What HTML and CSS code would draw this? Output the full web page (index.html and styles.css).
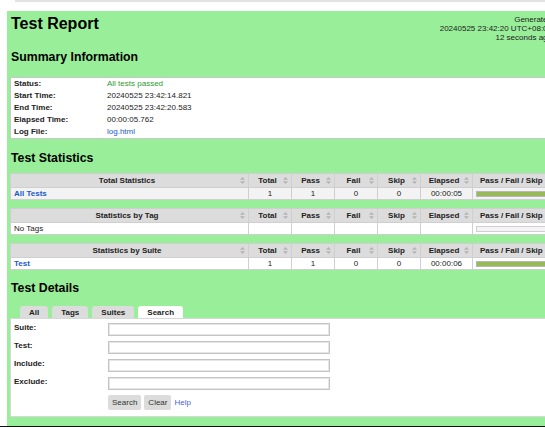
FILE: index.html
```html
<!DOCTYPE html>
<html lang="en">
  <head>
    <meta charset="UTF-8" />
    <title>Test Report</title>
    <link rel="stylesheet" href="styles.css">
  </head>
  <body>
    <div class="topline"></div>
    <div class="page">
      <div class="header">
        <div class="generated">Generated<br />20240525 23:42:20 UTC+08:00<br />12 seconds ago</div>
        <h1>Test Report</h1>
      </div>

      <h2 class="summary-title">Summary Information</h2>
      <table class="summary">
        <tr><th>Status:</th><td class="pass">All tests passed</td></tr>
        <tr><th>Start Time:</th><td>20240525 23:42:14.821</td></tr>
        <tr><th>End Time:</th><td>20240525 23:42:20.583</td></tr>
        <tr><th>Elapsed Time:</th><td>00:00:05.762</td></tr>
        <tr><th>Log File:</th><td><a href="#">log.html</a></td></tr>
      </table>

      <h2 class="stats-title">Test Statistics</h2>
      <table class="stats">
        <colgroup>
          <col class="c-name" /><col class="c-num" /><col class="c-num" /><col class="c-num" /><col class="c-num" /><col class="c-time" /><col />
        </colgroup>
        <tr>
          <th>Total Statistics<span class="sort"><svg viewBox="0 0 5 7" width="5" height="7"><path d="M2.5 0 L5 2.7 L0 2.7 Z M2.5 7 L5 4.3 L0 4.3 Z" /></svg></span></th>
          <th>Total<span class="sort"><svg viewBox="0 0 5 7" width="5" height="7"><path d="M2.5 0 L5 2.7 L0 2.7 Z M2.5 7 L5 4.3 L0 4.3 Z" /></svg></span></th>
          <th>Pass<span class="sort"><svg viewBox="0 0 5 7" width="5" height="7"><path d="M2.5 0 L5 2.7 L0 2.7 Z M2.5 7 L5 4.3 L0 4.3 Z" /></svg></span></th>
          <th>Fail<span class="sort"><svg viewBox="0 0 5 7" width="5" height="7"><path d="M2.5 0 L5 2.7 L0 2.7 Z M2.5 7 L5 4.3 L0 4.3 Z" /></svg></span></th>
          <th>Skip<span class="sort"><svg viewBox="0 0 5 7" width="5" height="7"><path d="M2.5 0 L5 2.7 L0 2.7 Z M2.5 7 L5 4.3 L0 4.3 Z" /></svg></span></th>
          <th>Elapsed<span class="sort"><svg viewBox="0 0 5 7" width="5" height="7"><path d="M2.5 0 L5 2.7 L0 2.7 Z M2.5 7 L5 4.3 L0 4.3 Z" /></svg></span></th>
          <th class="graph-head">Pass / Fail / Skip</th>
        </tr>
        <tr class="row-grey">
          <td class="name"><a href="#">All Tests</a></td>
          <td>1</td><td>1</td><td>0</td><td>0</td><td>00:00:05</td>
          <td class="graph-cell"><div class="graph"><div class="graph-pass"></div></div></td>
        </tr>
      </table>

      <table class="stats">
        <colgroup>
          <col class="c-name" /><col class="c-num" /><col class="c-num" /><col class="c-num" /><col class="c-num" /><col class="c-time" /><col />
        </colgroup>
        <tr>
          <th>Statistics by Tag<span class="sort"><svg viewBox="0 0 5 7" width="5" height="7"><path d="M2.5 0 L5 2.7 L0 2.7 Z M2.5 7 L5 4.3 L0 4.3 Z" /></svg></span></th>
          <th>Total<span class="sort"><svg viewBox="0 0 5 7" width="5" height="7"><path d="M2.5 0 L5 2.7 L0 2.7 Z M2.5 7 L5 4.3 L0 4.3 Z" /></svg></span></th>
          <th>Pass<span class="sort"><svg viewBox="0 0 5 7" width="5" height="7"><path d="M2.5 0 L5 2.7 L0 2.7 Z M2.5 7 L5 4.3 L0 4.3 Z" /></svg></span></th>
          <th>Fail<span class="sort"><svg viewBox="0 0 5 7" width="5" height="7"><path d="M2.5 0 L5 2.7 L0 2.7 Z M2.5 7 L5 4.3 L0 4.3 Z" /></svg></span></th>
          <th>Skip<span class="sort"><svg viewBox="0 0 5 7" width="5" height="7"><path d="M2.5 0 L5 2.7 L0 2.7 Z M2.5 7 L5 4.3 L0 4.3 Z" /></svg></span></th>
          <th>Elapsed<span class="sort"><svg viewBox="0 0 5 7" width="5" height="7"><path d="M2.5 0 L5 2.7 L0 2.7 Z M2.5 7 L5 4.3 L0 4.3 Z" /></svg></span></th>
          <th class="graph-head">Pass / Fail / Skip</th>
        </tr>
        <tr>
          <td class="name plain">No Tags</td>
          <td></td><td></td><td></td><td></td><td></td>
          <td class="graph-cell"><div class="graph empty"></div></td>
        </tr>
      </table>

      <table class="stats">
        <colgroup>
          <col class="c-name" /><col class="c-num" /><col class="c-num" /><col class="c-num" /><col class="c-num" /><col class="c-time" /><col />
        </colgroup>
        <tr>
          <th>Statistics by Suite<span class="sort"><svg viewBox="0 0 5 7" width="5" height="7"><path d="M2.5 0 L5 2.7 L0 2.7 Z M2.5 7 L5 4.3 L0 4.3 Z" /></svg></span></th>
          <th>Total<span class="sort"><svg viewBox="0 0 5 7" width="5" height="7"><path d="M2.5 0 L5 2.7 L0 2.7 Z M2.5 7 L5 4.3 L0 4.3 Z" /></svg></span></th>
          <th>Pass<span class="sort"><svg viewBox="0 0 5 7" width="5" height="7"><path d="M2.5 0 L5 2.7 L0 2.7 Z M2.5 7 L5 4.3 L0 4.3 Z" /></svg></span></th>
          <th>Fail<span class="sort"><svg viewBox="0 0 5 7" width="5" height="7"><path d="M2.5 0 L5 2.7 L0 2.7 Z M2.5 7 L5 4.3 L0 4.3 Z" /></svg></span></th>
          <th>Skip<span class="sort"><svg viewBox="0 0 5 7" width="5" height="7"><path d="M2.5 0 L5 2.7 L0 2.7 Z M2.5 7 L5 4.3 L0 4.3 Z" /></svg></span></th>
          <th>Elapsed<span class="sort"><svg viewBox="0 0 5 7" width="5" height="7"><path d="M2.5 0 L5 2.7 L0 2.7 Z M2.5 7 L5 4.3 L0 4.3 Z" /></svg></span></th>
          <th class="graph-head">Pass / Fail / Skip</th>
        </tr>
        <tr>
          <td class="name"><a href="#">Test</a></td>
          <td>1</td><td>1</td><td>0</td><td>0</td><td>00:00:06</td>
          <td class="graph-cell"><div class="graph"><div class="graph-pass"></div></div></td>
        </tr>
      </table>

      <h2 class="details-title">Test Details</h2>
      <div class="tabs">
        <span class="tab">All</span>
        <span class="tab">Tags</span>
        <span class="tab">Suites</span>
        <span class="tab selected">Search</span>
      </div>
      <div class="tab-content">
        <div class="search-form">
          <label>Suite:</label><input type="text" />
          <label>Test:</label><input type="text" />
          <label>Include:</label><input type="text" />
          <label>Exclude:</label><input type="text" />
          <span></span>
          <div class="search-buttons">
            <button>Search</button>
            <button>Clear</button>
            <a href="#" class="help">Help</a>
          </div>
        </div>
      </div>
    </div>
    <div class="bottom-bar"></div>
  </body>
</html>
```

FILE: styles.css
```css
html {
  overflow: hidden;
}

body {
  margin: 0;
  width: 620px;
  background: #fff;
  font-family: "Liberation Sans", Arial, sans-serif;
  font-size: 8px;
  color: #222;
}

a {
  color: #1a5acc;
  text-decoration: none;
}

.topline {
  height: 2px;
  margin-left: 15px;
  margin-bottom: 9px;
  background: #e2e2e2;
}

.page {
  width: 542px;
  margin-left: 7px;
  padding: 2px 6px 9px 3px;
  background: #99ee99; /* pass green */
}

/* the generated block hangs below the title, like in the real report */
.header {
  height: 20px;
}

h1 {
  margin: 2px 0 0 1px;
  font-size: 16px;
  line-height: 18px;
  color: #000;
}

.generated {
  float: right;
  margin-top: 0;
  text-align: right;
  line-height: 9px;
  color: #222;
}

h2 {
  margin: 0 0 0 1px;
  font-size: 12.3px;
  line-height: 14px;
  color: #000;
}

.summary-title {
  margin-top: 15px;
}

.stats-title {
  margin-top: 12px;
}

.details-title {
  margin-top: 11px;
}

/* summary */
.summary {
  width: 100%;
  margin-top: 13px;
  border-collapse: collapse;
  background: #fff;
  border: 1px solid #c8c8c8;
}

.summary th,
.summary td {
  padding: 0 3px;
  height: 12px;
  line-height: 12px;
  text-align: left;
  white-space: nowrap;
}

.summary th {
  width: 87px;
}

.pass {
  color: #2e9a2e;
}

/* statistics */
.stats {
  width: 100%;
  margin-top: 8px;
  table-layout: fixed;
  border-collapse: collapse;
  background: #fff;
}

.c-name {
  width: 238px;
}

.c-num {
  width: 43px;
}

.c-time {
  width: 52px;
}

.stats th,
.stats td {
  border: 1px solid #cfcfcf;
  padding: 0 3px;
  white-space: nowrap;
  overflow: hidden;
}

.stats th {
  height: 13px;
  line-height: 13px;
  background: #dcdcdc;
  font-weight: bold;
  text-align: center;
}

.stats th.graph-head {
  text-align: left;
  padding-left: 7px;
}

.stats td {
  height: 11px;
  line-height: 11px;
  text-align: center;
  color: #222;
}

.row-grey td {
  background: #f3f3f3;
}

.stats td.name {
  text-align: left;
  font-weight: bold;
}

.stats td.plain {
  font-weight: normal;
}

.sort {
  float: right;
  height: 13px;
  display: flex;
  align-items: center;
}

.sort svg {
  fill: #b4b4b4;
}

.graph-cell {
  padding-right: 0;
}

.graph {
  height: 4px;
  border: 1px solid #b8b8b8;
  background: #f4f4f4;
  margin-right: -4px;
}

.graph-pass {
  height: 100%;
  background: #97b957;
}

.graph.empty {
  border-color: #d0d0d0;
}

/* details */
.tabs {
  display: flex;
  gap: 4px;
  margin-top: 11px;
  padding-left: 10px;
}

.tab {
  padding: 0 9px;
  height: 12px;
  line-height: 13px;
  background: #dcdcdc;
  border-radius: 3px 3px 0 0;
  font-weight: bold;
}

.tab.selected {
  background: #fff;
}

.tab-content {
  background: #fff;
  border: 1px solid #d8d8d8;
  padding: 4px 3px 6px;
}

.search-form {
  display: grid;
  grid-template-columns: 94px 222px;
  row-gap: 5px;
  align-items: start;
}

.search-form label {
  font-weight: bold;
  line-height: 10px;
}

.search-form input {
  height: 13px;
  box-sizing: border-box;
  border: 1px solid #c4c4c4;
  box-shadow: inset 0 0 0 1px #e6e6e6;
  padding: 0;
  margin: 0;
}

.search-buttons {
  display: flex;
  align-items: center;
  gap: 3px;
}

.search-buttons button {
  height: 15px;
  padding: 0 4px;
  border: none;
  border-radius: 2px;
  background: #dcdcdc;
  font-family: inherit;
  font-size: 8px;
  color: #333;
}

.help {
  color: #4a62d8;
}

.bottom-bar {
  height: 3px;
  background: #111;
}
```
